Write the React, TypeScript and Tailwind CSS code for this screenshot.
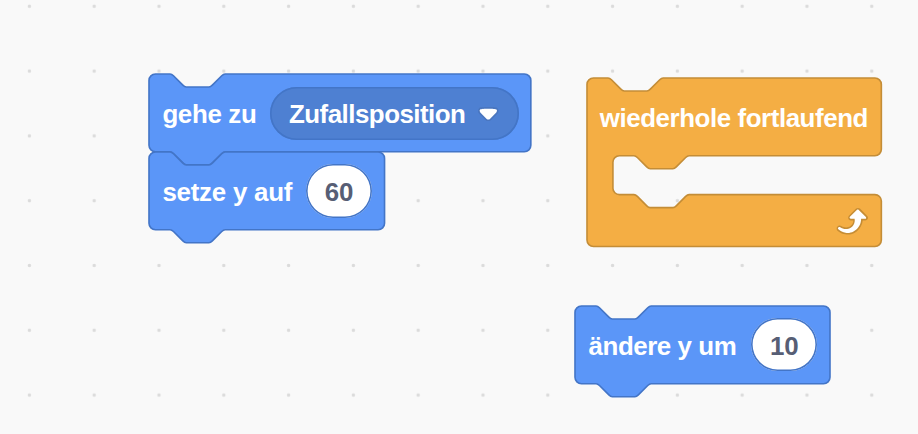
import type { ReactNode } from 'react';

// Workspace zoom: one block unit in pixels.
const SCALE = 1.62;

const NOTCH_RIGHT = 'h1 c0.9,0 1.5,0.5 2.1,1.1 l5.8,5.8 c0.6,0.6 1.2,1.1 2.1,1.1 h14 c0.9,0 1.5,-0.5 2.1,-1.1 l5.8,-5.8 c0.6,-0.6 1.2,-1.1 2.1,-1.1 h1';
const NOTCH_LEFT = 'h-1 c-0.9,0 -1.5,0.5 -2.1,1.1 l-5.8,5.8 c-0.6,0.6 -1.2,1.1 -2.1,1.1 h-14 c-0.9,0 -1.5,-0.5 -2.1,-1.1 l-5.8,-5.8 c-0.6,-0.6 -1.2,-1.1 -2.1,-1.1 h-1';

function stackPath(w: number) {
  return `M0,4 A4,4 0 0,1 4,0 H12 ${NOTCH_RIGHT} H${w - 4} a4,4 0 0,1 4,4 v40 a4,4 0 0,1 -4,4 H48 ${NOTCH_LEFT} H4 a4,4 0 0,1 -4,-4 z`;
}

function loopPath(w: number) {
  return `M0,4 A4,4 0 0,1 4,0 H12 ${NOTCH_RIGHT} H${w - 4} a4,4 0 0,1 4,4 v40 a4,4 0 0,1 -4,4 H64 ${NOTCH_LEFT} h-8 a4,4 0 0,0 -4,4 v16 a4,4 0 0,0 4,4 h8 ${NOTCH_RIGHT} H${w - 4} a4,4 0 0,1 4,4 v24 a4,4 0 0,1 -4,4 H4 a4,4 0 0,1 -4,-4 z`;
}

function Shape({ d, className }: { d: string; className: string }) {
  return (
    <svg className="absolute left-0 top-0 h-full w-full overflow-visible" aria-hidden="true">
      <path d={d} transform={`scale(${SCALE})`} className={className} strokeWidth="1" />
    </svg>
  );
}

const BLUE = 'fill-[#5b96f8] stroke-[#4375c7]';
const ORANGE = 'fill-[#f4ae44] stroke-[#c48d37]';

function Block({ place, d, color, children }: { place: string; d: string; color: string; children: ReactNode }) {
  return (
    <div className={`absolute ${place}`}>
      <Shape d={d} className={color} />
      <div className="relative flex h-[77.76px] items-center pl-[13.4px] pt-[2px]">{children}</div>
    </div>
  );
}

function Label({ className, children }: { className: string; children: ReactNode }) {
  return <span className={`shrink-0 text-white ${className}`}>{children}</span>;
}

function NumberInput({ value }: { value: string }) {
  return (
    <span className="-mt-[1.6px] flex h-[53.4px] w-[66.4px] shrink-0 items-center justify-center rounded-full bg-white pt-[2px] tracking-[-0.3px] text-[#575e75] shadow-[inset_0_0_0_1.6px_#4375c7]">
      {value}
    </span>
  );
}

function Caret() {
  return (
    <svg viewBox="0 0 12.71 8.79" className="h-[14.24px] w-[20.59px] shrink-0" aria-hidden="true">
      <path
        d="M12.71,2.44A2.41,2.41,0,0,1,12,4.16L8.08,8.08a2.45,2.45,0,0,1-3.45,0L0.72,4.16A2.42,2.42,0,0,1,0,2.44,2.48,2.48,0,0,1,.71.71C1,0.47,1.43,0,6.36,0S11.75,0.46,12,.71A2.44,2.44,0,0,1,12.71,2.44Z"
        fill="#231f20"
        opacity="0.1"
      />
      <path
        d="M6.36,7.79a1.43,1.43,0,0,1-1-.42L1.42,3.45a1.44,1.44,0,0,1,0-2c0.56-.56,9.31-0.56,9.87,0a1.44,1.44,0,0,1,0,2L7.37,7.37A1.43,1.43,0,0,1,6.36,7.79Z"
        fill="#fff"
      />
    </svg>
  );
}

function LoopArrow() {
  return (
    <svg viewBox="0 0 24 24" className="h-[38.88px] w-[38.88px]" aria-hidden="true">
      <path
        fill="#c68d35"
        d="M23.3,11c-0.3,0.6-0.9,1-1.5,1h-1.6c-0.1,1.3-0.5,2.5-1.1,3.6c-0.9,1.7-2.3,3.2-4.1,4.1c-1.7,0.9-3.6,1.2-5.5,0.9c-1.8-0.3-3.5-1.1-4.9-2.3c-0.7-0.7-0.7-1.9,0-2.6c0.6-0.6,1.6-0.7,2.3-0.2H7c0.9,0.6,1.9,0.9,2.9,0.9s1.9-0.3,2.7-0.9c1.1-0.8,1.8-2.1,1.8-3.5h-1.5c-0.9,0-1.7-0.7-1.7-1.7c0-0.4,0.2-0.9,0.5-1.2l4.4-4.4c0.7-0.6,1.7-0.6,2.4,0L23,9.2C23.5,9.7,23.6,10.4,23.3,11z"
      />
      <path
        fill="#fff"
        d="M21.8,11h-2.6c0,1.5-0.3,2.9-1,4.2c-0.8,1.6-2.1,2.8-3.7,3.6c-1.5,0.8-3.3,1.1-4.9,0.8c-1.6-0.2-3.2-1-4.4-2.1c-0.4-0.3-0.4-0.9-0.1-1.2c0.3-0.4,0.9-0.4,1.2-0.1l0,0c1,0.7,2.2,1.1,3.4,1.1s2.3-0.3,3.3-1c0.9-0.6,1.6-1.5,2-2.6c0.3-0.9,0.4-1.8,0.2-2.8h-2.4c-0.4,0-0.7-0.3-0.7-0.7c0-0.2,0.1-0.3,0.2-0.4l4.4-4.4c0.3-0.3,0.7-0.3,0.9,0L22,9.8c0.3,0.3,0.4,0.6,0.3,0.9S22,11,21.8,11z"
      />
    </svg>
  );
}

export default function App() {
  return (
    <main className="relative h-[434px] w-[918px] overflow-hidden whitespace-nowrap bg-[#f9f9f9] bg-[radial-gradient(circle_at_center,#dbdbdb_1.3px,transparent_2.1px)] bg-[length:64.8px_64.8px] bg-[position:-3px_-26.1px] font-['Liberation_Sans',Arial,sans-serif] text-[25.92px] font-bold leading-[30px]">
      <Block place="left-[149px] top-[74.2px] h-[77.8px] w-[382px]" d={stackPath(235.7)} color={BLUE}>
        <Label className="w-[107.6px] tracking-[-0.35px]">gehe zu</Label>
        <span className="-mt-[1.6px] flex h-[53.4px] w-[249.2px] shrink-0 items-center rounded-full bg-[#4e80d2] pl-[19px] pt-[2px] shadow-[inset_0_0_0_1.6px_#4375c7]">
          <Label className="w-[189px] tracking-[-0.52px]">Zufallsposition</Label>
          <Caret />
        </span>
      </Block>

      <Block place="left-[149px] top-[152px] h-[77.8px] w-[236px]" d={stackPath(145.4)} color={BLUE}>
        <Label className="w-[143.4px] tracking-[-0.25px]">setze y auf</Label>
        <NumberInput value="60" />
      </Block>

      <Block place="left-[587px] top-[78px] h-[168.5px] w-[294.5px]" d={loopPath(181.7)} color={ORANGE}>
        <Label className="-ml-[0.6px] tracking-[-0.44px]">wiederhole fortlaufend</Label>
        <span className="absolute left-[242.6px] top-[123.4px]">
          <LoopArrow />
        </span>
      </Block>

      <Block place="left-[575.2px] top-[305.6px] h-[77.8px] w-[255px]" d={stackPath(157.4)} color={BLUE}>
        <Label className="w-[162.4px] pt-[1px] tracking-[-0.45px]">ändere y um</Label>
        <NumberInput value="10" />
      </Block>
    </main>
  );
}
